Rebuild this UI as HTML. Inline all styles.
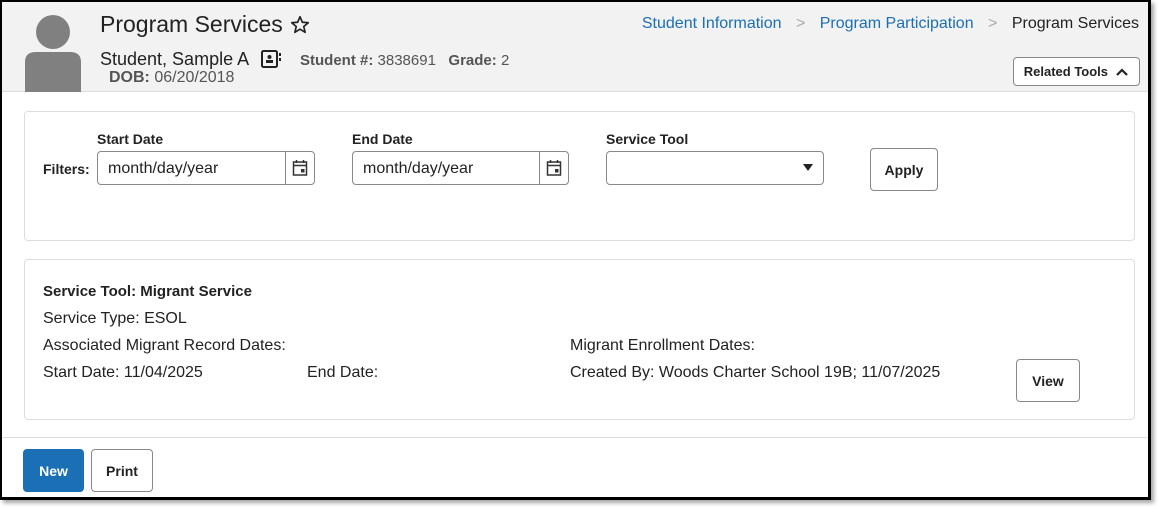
<!DOCTYPE html>
<html><head><style>
*{box-sizing:border-box;margin:0;padding:0}
body{width:1159px;height:507px;background:#fff;font-family:"Liberation Sans",Arial,sans-serif;position:relative;overflow:hidden;color:#222}
.frame{position:absolute;left:0;top:0;width:1151px;height:500px;border:2px solid #000;border-right-width:3px;border-bottom-width:3px;background:#fff;box-shadow:3px 3px 4px rgba(0,0,0,.35);overflow:hidden}
.hdr{position:absolute;left:0;top:0;width:100%;height:90px;background:#f2f2f2;border-bottom:1px solid #ddd}
.abs{position:absolute;white-space:nowrap}
.lbl{font-weight:bold;font-size:14px;color:#222}
.inp{position:absolute;height:34px;border:1px solid #888;border-radius:4px;background:#fff;font-size:15px}
.btn{position:absolute;border:1px solid #888;border-radius:4px;background:#fff;font-weight:bold;font-size:14px;display:flex;align-items:center;justify-content:center}
.card{position:absolute;border:1px solid #ddd;border-radius:4px;background:#fff}
.t{font-size:16px;color:#222}
</style></head><body>
<div class="frame">
 <div class="hdr">
  <svg class="abs" style="left:22px;top:10px" width="58" height="80" viewBox="0 0 58 80"><circle cx="29" cy="20" r="17" fill="#808080"/><path d="M1 80 V50 Q1 40 12 40 H46 Q57 40 57 50 V80Z" fill="#808080"/></svg>
  <div class="abs" style="left:98px;top:9px;font-size:23px;color:#222">Program Services</div>
  <svg class="abs" style="left:287px;top:12px" width="22" height="22" viewBox="0 0 24 24"><path d="M12 3l2.6 6 6.4.5-4.9 4.2 1.5 6.3L12 16.6 6.4 20l1.5-6.3L3 9.5l6.4-.5z" fill="none" stroke="#222" stroke-width="1.8" stroke-linejoin="round"/></svg>
  <div class="abs" style="left:98px;top:47px;font-size:18px;color:#222">Student, Sample A</div>
  <svg class="abs" style="left:258px;top:47px" width="22" height="20" viewBox="0 0 22 20"><rect x="2" y="2" width="15" height="16" rx="1.5" fill="none" stroke="#222" stroke-width="2"/><circle cx="9.5" cy="8" r="2" fill="#222"/><rect x="6" y="11" width="7" height="3" fill="#222"/><rect x="19" y="4" width="2" height="3" fill="#222"/><rect x="19" y="9" width="2" height="3" fill="#222"/></svg>
  <div class="abs" style="left:298px;top:50px;font-size:15px;color:#555"><b>Student #:</b> 3838691&nbsp;&nbsp; <b>Grade:</b> 2</div>
  <div class="abs" style="left:107px;top:67px;font-size:16px;color:#555"><b>DOB:</b> 06/20/2018</div>
  <div class="abs" style="right:9px;top:13px;font-size:16px;color:#1a6fb5">Student Information <span style="color:#aaa;margin:0 10px">&gt;</span> Program Participation <span style="color:#aaa;margin:0 10px">&gt;</span> <span style="color:#222">Program Services</span></div>
  <div class="btn" style="left:1011px;top:55px;width:127px;height:29px;font-size:13px">Related Tools&nbsp;&nbsp;<svg width="14" height="10" viewBox="0 0 14 10"><path d="M2 8l5-5 5 5" fill="none" stroke="#222" stroke-width="2.2"/></svg></div>
 </div>
 <div class="card" style="left:22px;top:109px;width:1111px;height:130px"></div>
 <div class="abs lbl" style="left:95px;top:129px">Start Date</div>
 <div class="abs lbl" style="left:350px;top:129px">End Date</div>
 <div class="abs lbl" style="left:604px;top:129px">Service Tool</div>
 <div class="abs lbl" style="left:41px;top:159px">Filters:</div>
 <div class="inp" style="left:95px;top:149px;width:218px"><span class="abs" style="left:10px;top:8px;font-size:16px">month/day/year</span><div class="abs" style="left:187px;top:0;height:32px;border-left:1px solid #888;width:29px"></div><svg class="abs" style="left:194px;top:7px" width="16" height="18" viewBox="0 0 16 18"><rect x="1.5" y="3" width="13" height="13" fill="none" stroke="#333" stroke-width="1.5"/><line x1="1.5" y1="6.5" x2="14.5" y2="6.5" stroke="#333" stroke-width="1.5"/><line x1="4.5" y1="1" x2="4.5" y2="4" stroke="#333" stroke-width="1.5"/><line x1="11.5" y1="1" x2="11.5" y2="4" stroke="#333" stroke-width="1.5"/><rect x="9" y="10" width="3.5" height="3.5" fill="#333"/></svg></div>
 <div class="inp" style="left:350px;top:149px;width:217px"><span class="abs" style="left:10px;top:8px;font-size:16px">month/day/year</span><div class="abs" style="left:186px;top:0;height:32px;border-left:1px solid #888;width:29px"></div><svg class="abs" style="left:193px;top:7px" width="16" height="18" viewBox="0 0 16 18"><rect x="1.5" y="3" width="13" height="13" fill="none" stroke="#333" stroke-width="1.5"/><line x1="1.5" y1="6.5" x2="14.5" y2="6.5" stroke="#333" stroke-width="1.5"/><line x1="4.5" y1="1" x2="4.5" y2="4" stroke="#333" stroke-width="1.5"/><line x1="11.5" y1="1" x2="11.5" y2="4" stroke="#333" stroke-width="1.5"/><rect x="9" y="10" width="3.5" height="3.5" fill="#333"/></svg></div>
 <div class="inp" style="left:604px;top:149px;width:218px"><svg class="abs" style="left:196px;top:12px" width="10" height="8" viewBox="0 0 10 8"><path d="M0 0h10L5 7z" fill="#222"/></svg></div>
 <div class="btn" style="left:868px;top:146px;width:68px;height:43px">Apply</div>
 <div class="card" style="left:22px;top:257px;width:1111px;height:161px"></div>
 <div class="abs t" style="left:41px;top:281px;font-weight:bold;font-size:15px">Service Tool: Migrant Service</div>
 <div class="abs t" style="left:41px;top:308px">Service Type: ESOL</div>
 <div class="abs t" style="left:41px;top:335px">Associated Migrant Record Dates:</div>
 <div class="abs t" style="left:568px;top:335px">Migrant Enrollment Dates:</div>
 <div class="abs t" style="left:41px;top:362px">Start Date: 11/04/2025</div>
 <div class="abs t" style="left:305px;top:362px">End Date:</div>
 <div class="abs t" style="left:568px;top:362px">Created By: Woods Charter School 19B; 11/07/2025</div>
 <div class="btn" style="left:1014px;top:357px;width:64px;height:43px">View</div>
 <div class="abs" style="left:0;top:435px;width:100%;border-top:1px solid #ddd"></div>
 <div class="btn" style="left:21px;top:447px;width:61px;height:43px;background:#1a6fb5;border-color:#1a6fb5;color:#fff">New</div>
 <div class="btn" style="left:89px;top:447px;width:62px;height:43px">Print</div>
</div>
</body></html>
